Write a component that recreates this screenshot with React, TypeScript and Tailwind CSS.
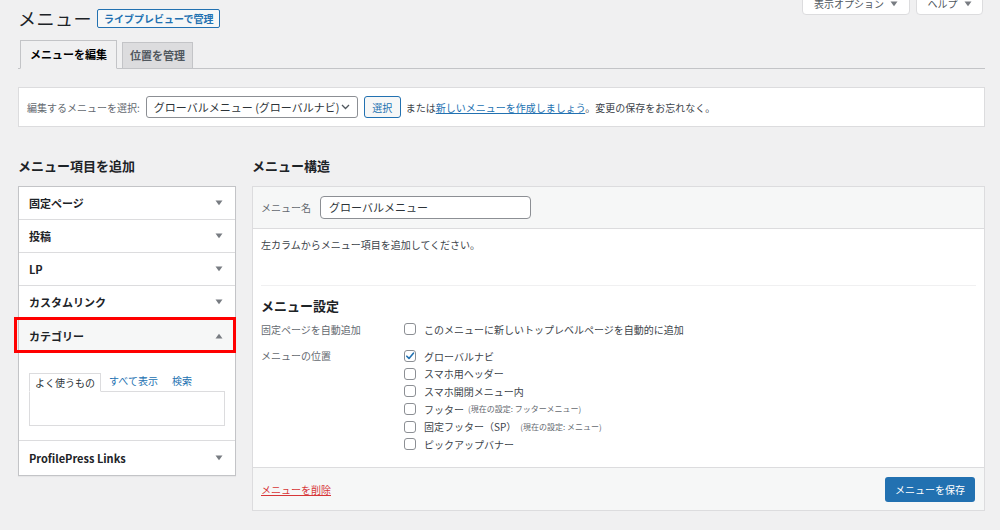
import React from "react";

const font = { fontFamily: '"Noto Sans CJK JP", "Noto Sans", sans-serif' };

function Arrow({ up = false }: { up?: boolean }) {
  return (
    <svg width="8" height="6" viewBox="0 0 8 6" className="shrink-0">
      {up ? <path d="M0.5 5.5 L4 0.8 L7.5 5.5 Z" fill="#787c82" /> : <path d="M0.5 0.5 L4 5.2 L7.5 0.5 Z" fill="#787c82" />}
    </svg>
  );
}

function Check({ checked = false }: { checked?: boolean }) {
  return (
    <span className="w-[12px] h-[12px] border border-[#8c8f94] rounded-[3px] bg-white flex items-center justify-center shrink-0">
      {checked && (
        <svg width="10" height="10" viewBox="0 0 10 10">
          <path d="M1.8 5.2 L4 7.4 L8.4 2.2" stroke="#2271b1" strokeWidth="1.6" fill="none" strokeLinecap="round" strokeLinejoin="round" />
        </svg>
      )}
    </span>
  );
}

function AccRow({ title, last = false }: { title: string; last?: boolean }) {
  return (
    <div className={`h-[33px] flex items-center justify-between pl-[10px] pr-[12px] ${last ? "h-[34px]" : "border-b border-[#dcdcde]"}`}>
      <span className="text-[11px] font-semibold text-[#1d2327]">{title}</span>
      <Arrow />
    </div>
  );
}

export default function App() {
  const locations: { label: string; note?: string; checked?: boolean }[] = [
    { label: "グローバルナビ", checked: true },
    { label: "スマホ用ヘッダー" },
    { label: "スマホ開閉メニュー内" },
    { label: "フッター", note: "(現在の設定: フッターメニュー)" },
    { label: "固定フッター（SP）", note: "(現在の設定: メニュー)" },
    { label: "ピックアップバナー" },
  ];
  return (
    <div style={font} className="w-[1000px] h-[530px] bg-[#f0f0f1] overflow-hidden pl-[18px] pr-[15px] text-[10px] text-[#3c434a]">
      {/* top row */}
      <div className="h-[40px] flex justify-between items-start">
        <div className="flex items-center mt-[6px] h-[24px]">
          <h1 className="text-[18px] leading-[24px] font-normal text-[#1d2327] tracking-[0.5px]">メニュー</h1>
          <span className="ml-[5px] h-[19px] px-[6px] flex items-center border border-[#2271b1] rounded-[2px] bg-[#f6f7f7] text-[#2271b1] text-[10px] font-semibold">ライブプレビューで管理</span>
        </div>
        <div className="flex gap-[6px] -mt-[8px]">
          <div className="h-[23px] w-[108px] bg-white border border-[#dcdcde] rounded-b-[4px] flex items-center justify-center gap-[6px] text-[#50575e]">
            <span>表示オプション</span>
            <Arrow />
          </div>
          <div className="h-[23px] w-[67px] bg-white border border-[#dcdcde] rounded-b-[4px] flex items-center justify-center gap-[6px] text-[#50575e] mr-[2px]">
            <span>ヘルプ</span>
            <Arrow />
          </div>
        </div>
      </div>

      {/* tabs */}
      <div className="flex items-end border-b border-[#c3c4c7] h-[29px] pl-[2px]">
        <div className="h-[29px] w-[97px] -mb-px border border-[#c3c4c7] border-b-[#f0f0f1] bg-[#f0f0f1] flex items-center justify-center text-[11px] font-semibold text-[#000]">
          メニューを編集
        </div>
        <div className="h-[27px] w-[71px] -mb-px ml-[5px] border border-[#c3c4c7] bg-[#dcdcde] flex items-center justify-center text-[11px] font-semibold text-[#50575e]">
          位置を管理
        </div>
      </div>

      {/* select bar */}
      <div className="mt-[18px] h-[40px] bg-white border border-[#dcdcde] flex items-center pl-[8px]">
        <span className="text-[#646970]">編集するメニューを選択:</span>
        <div className="ml-[6px] w-[212px] h-[22px] border border-[#8c8f94] rounded-[3px] flex items-center justify-between pl-[7px] pr-[7px] text-[#2c3338] text-[11px]">
          <span>グローバルメニュー (グローバルナビ)</span>
          <svg width="9" height="6" viewBox="0 0 9 6"><path d="M1 1 L4.5 4.5 L8 1" stroke="#50575e" strokeWidth="1.3" fill="none" /></svg>
        </div>
        <div className="ml-[6px] w-[37px] h-[22px] border border-[#2271b1] rounded-[3px] bg-[#f6f7f7] flex items-center justify-center text-[#2271b1]">選択</div>
        <span className="ml-[5px] text-[#3c434a]">
          または<span className="text-[#2271b1] underline">新しいメニューを作成しましょう</span>。変更の保存をお忘れなく。
        </span>
      </div>

      {/* columns */}
      <div className="flex gap-[16px] mt-[29px]">
        {/* left */}
        <div className="w-[218px] shrink-0">
          <h2 className="text-[13px] leading-[20px] font-semibold text-[#1d2327]">メニュー項目を追加</h2>
          <div className="mt-[10px] bg-white border border-[#c3c4c7] shadow-[0_1px_1px_rgba(0,0,0,0.04)]">
            <AccRow title="固定ページ" />
            <AccRow title="投稿" />
            <AccRow title="LP" />
            <AccRow title="カスタムリンク" />
            <div className="relative h-[34px] flex items-center justify-between pl-[10px] pr-[12px] bg-[#f6f7f7]">
              <span className="text-[11px] font-semibold text-[#1d2327]">カテゴリー</span>
              <Arrow up />
              <div className="absolute -left-[5px] -right-[1px] -top-[2px] bottom-0 border-[3px] border-[#ff0000] pointer-events-none" />
            </div>
            <div className="px-[10px] pt-[20px] pb-[14px] border-b border-[#dcdcde]">
              <div className="flex items-end h-[18px]">
                <div className="h-[19px] -mb-px px-[5px] border border-[#dcdcde] border-b-white bg-white flex items-center text-[#2c3338] relative z-10">よく使うもの</div>
                <span className="ml-[8px] mb-[3px] text-[#2271b1]">すべて表示</span>
                <span className="ml-[14px] mb-[3px] text-[#2271b1]">検索</span>
              </div>
              <div className="h-[35px] border border-[#dcdcde] bg-white" />
            </div>
            <AccRow title="ProfilePress Links" last />
          </div>
        </div>

        {/* right */}
        <div className="flex-1">
          <h2 className="text-[13px] leading-[20px] font-semibold text-[#1d2327]">メニュー構造</h2>
          <div className="mt-[10px] bg-white border border-[#dcdcde]">
            <div className="h-[42px] bg-[#f6f7f7] border-b border-[#dcdcde] flex items-center pl-[8px]">
              <span className="text-[#646970]">メニュー名</span>
              <div className="ml-[9px] w-[211px] h-[23px] bg-white border border-[#8c8f94] rounded-[4px] flex items-center pl-[8px] text-[11px] text-[#2c3338]">グローバルメニュー</div>
            </div>
            <div className="px-[8px]">
              <p className="leading-[14px] mt-[9px] text-[#3c434a]">左カラムからメニュー項目を追加してください。</p>
              <div className="mt-[33px] border-t border-[#f0f0f1]" />
              <h3 className="mt-[11px] text-[13px] leading-[18px] font-semibold text-[#1d2327]">メニュー設定</h3>
              <div className="flex mt-[7px] h-[14px] items-center">
                <span className="w-[143px] text-[#646970]">固定ページを自動追加</span>
                <Check />
                <span className="ml-[8px] text-[#3c434a]">このメニューに新しいトップレベルページを自動的に追加</span>
              </div>
              <div className="flex mt-[13px]">
                <span className="w-[143px] text-[#646970] leading-[14px]">メニューの位置</span>
                <div className="flex flex-col gap-[3.7px]">
                  {locations.map((l) => (
                    <div key={l.label} className="flex items-center h-[14px]">
                      <Check checked={l.checked} />
                      <span className="ml-[8px] text-[#3c434a]">{l.label}</span>
                      {l.note && <span className="ml-[4px] text-[8px] text-[#646970]">{l.note}</span>}
                    </div>
                  ))}
                </div>
              </div>
            </div>
            <div className="mt-[16px] h-[43px] bg-[#f6f7f7] border-t border-[#dcdcde] flex items-center justify-between pl-[8px] pr-[9px]">
              <span className="text-[#d63638] underline">メニューを削除</span>
              <div className="w-[90px] h-[25px] bg-[#2271b1] rounded-[3px] flex items-center justify-center text-white">メニューを保存</div>
            </div>
          </div>
        </div>
      </div>
    </div>
  );
}
